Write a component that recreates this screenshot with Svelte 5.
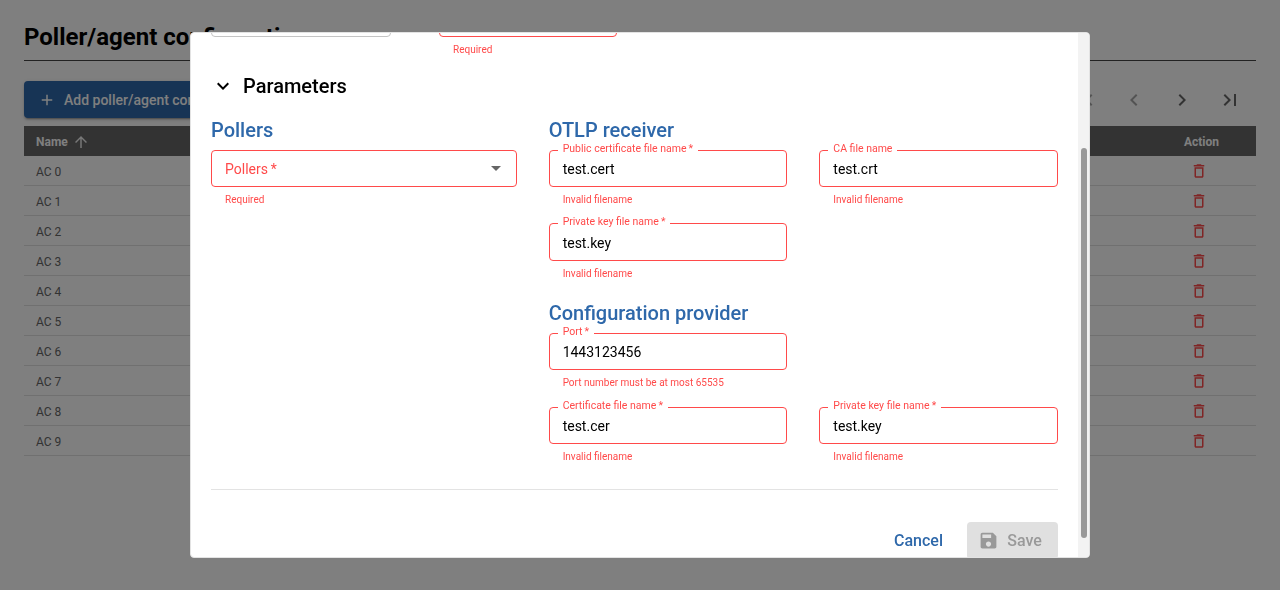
<script>
  const rows = Array.from({ length: 10 }, (_, i) => `AC ${i}`);
</script>

{#snippet icon(d, size)}
  <svg width={size} height={size} viewBox="0 0 24 24" fill="currentColor" aria-hidden="true"><path {d} /></svg>
{/snippet}

{#snippet field(label, value, error)}
  <div class="field">
    <div class="box">
      <span class="value">{value}</span>
      <span class="label">{label}</span>
      <fieldset><legend><span>{label}</span></legend></fieldset>
    </div>
    <p class="helper">{error}</p>
  </div>
{/snippet}

<main>
  <h1>Poller/agent configuration</h1>
  <div class="toolbar">
    <button class="add">{@render icon('M19 13h-6v6h-2v-6H5v-2h6V5h2v6h6v2z', 18)}<span>Add poller/agent configuration</span></button>
    <div class="pages">
      <button class="off">{@render icon('M18.41 16.59L13.82 12l4.59-4.59L17 6l-6 6 6 6zM6 6h2v12H6z', 24)}</button>
      <button class="off">{@render icon('M15.41 7.41L14 6l-6 6 6 6 1.41-1.41L10.83 12z', 24)}</button>
      <button>{@render icon('M10 6L8.59 7.41 13.17 12l-4.58 4.59L10 18l6-6z', 24)}</button>
      <button>{@render icon('M5.59 7.41L10.18 12l-4.59 4.59L7 18l6-6-6-6zM16 6h2v12h-2z', 24)}</button>
    </div>
  </div>
  <div class="row head">
    <span class="name">Name {@render icon('M4 12l1.41 1.41L11 7.83V20h2V7.83l5.58 5.59L20 12l-8-8-8 8z', 18)}</span>
    <span class="action">Action</span>
  </div>
  {#each rows as row}
    <div class="row">
      <span class="name">{row}</span>
      <span class="action trash">{@render icon('M16 9v10H8V9h8m-1.5-6h-5l-1 1H5v2h14V4h-3.5l-1-1zM18 7H6v12c0 1.1.9 2 2 2h8c1.1 0 2-.9 2-2V7z', 18)}</span>
    </div>
  {/each}
</main>

<div class="backdrop">
  <div class="modal">
    <div class="content">
      <div class="top">
        <div><div class="stub"></div></div>
        <div><div class="stub bad"></div><p class="helper">Required</p></div>
      </div>
      <div class="params">{@render icon('M16.59 8.59L12 13.17 7.41 8.59 6 10l6 6 6-6z', 24)}<h2>Parameters</h2></div>
      <div class="columns">
        <section>
          <h3>Pollers</h3>
          <div class="box select">
            <span class="value">{'Pollers\u2009*'}</span>
            <span class="arrow">{@render icon('M7 10l5 5 5-5z', 24)}</span>
            <fieldset></fieldset>
          </div>
          <p class="helper">Required</p>
        </section>
        <div class="right">
          <section>
            <h3>OTLP receiver</h3>
            <div class="grid">
              {@render field('Public certificate file name\u2009*', 'test.cert', 'Invalid filename')}
              {@render field('CA file name', 'test.crt', 'Invalid filename')}
              {@render field('Private key file name\u2009*', 'test.key', 'Invalid filename')}
            </div>
          </section>
          <section class="provider">
            <h3>Configuration provider</h3>
            <div class="grid">
              {@render field('Port\u2009*', '1443123456', 'Port number must be at most 65535')}
              <div></div>
              {@render field('Certificate file name\u2009*', 'test.cer', 'Invalid filename')}
              {@render field('Private key file name\u2009*', 'test.key', 'Invalid filename')}
            </div>
          </section>
        </div>
      </div>
      <hr />
      <div class="buttons">
        <button class="cancel">Cancel</button>
        <button class="save" disabled>{@render icon('M17 3H5c-1.11 0-2 .9-2 2v14c0 1.1.89 2 2 2h14c1.1 0 2-.9 2-2V7l-4-4zm-5 16c-1.66 0-3-1.34-3-3s1.34-3 3-3 3 1.34 3 3-1.34 3-3 3zm3-10H5V5h10v4z', 21)}<span>Save</span></button>
      </div>
    </div>
    <div class="scrollbar"><div class="thumb"></div></div>
  </div>
</div>

<style>
  :global(body) {
    font-family: Roboto, sans-serif;
    background: #fff;
    overflow: hidden;
  }
  :global(*) { box-sizing: border-box; }
  h1, h2, h3, p { margin: 0; }
  button {
    font-family: inherit;
    border: 0;
    background: none;
    padding: 0;
    display: flex;
    align-items: center;
    justify-content: center;
  }
  svg { display: block; flex: none; }
  main { height: 590px; padding: 0 24px; }
  h1 {
    height: 61px;
    padding-top: 13px;
    border-bottom: 1px solid #444;
    font-size: 24px;
    line-height: 48px;
    font-weight: 700;
    color: #000;
  }
  .toolbar {
    display: flex;
    justify-content: space-between;
    height: 65px;
    padding-top: 20px;
  }
  .add {
    height: 37px;
    padding: 0 16px 0 14px;
    gap: 8px;
    background: #2e68aa;
    color: #fff;
    border-radius: 4px;
    font-size: 14px;
    font-weight: 500;
    box-shadow: 0 3px 1px -2px rgba(0, 0, 0, 0.2), 0 2px 2px rgba(0, 0, 0, 0.14), 0 1px 5px rgba(0, 0, 0, 0.12);
  }
  .pages { display: flex; height: 38px; padding-right: 2px; }
  .pages button { width: 48px; color: #666; }
  .pages .off { color: #a6a6a6; }
  .row {
    height: 30px;
    display: flex;
    align-items: center;
    justify-content: space-between;
    padding: 0 0 0 12px;
    border-bottom: 1px solid #e0e0e0;
    font-size: 12px;
    color: #666;
  }
  .head {
    background: #666;
    border: 0;
    color: #fff;
    font-weight: 700;
  }
  .name { display: flex; align-items: center; gap: 4px; padding-top: 2px; }
  .head .name { padding-top: 1px; }
  .name svg { opacity: 0.9; }
  .action { width: 110px; display: flex; justify-content: center; }
  .head .action { padding: 1px 0 0 1px; }
  .trash { color: #ff4a4a; padding-right: 4px; }
  .backdrop {
    position: fixed;
    inset: 0;
    background: rgba(0, 0, 0, 0.5);
    display: flex;
    align-items: center;
    justify-content: center;
  }
  .modal {
    width: 900px;
    height: 526px;
    background: #fff;
    border: 1px solid #e3e3e3;
    border-radius: 4px;
    overflow: hidden;
    display: flex;
  }
  .content { width: 887px; padding: 0 20px; flex: none; }
  .scrollbar {
    width: 11px;
    flex: none;
    background: #f3f3f3;
    padding: 115px 2px 0 3px;
  }
  .thumb { width: 6px; height: 390px; border-radius: 3px; background: #999; }
  .top { display: flex; gap: 48px; height: 41px; }
  .top > div { width: 180px; }
  .top > div + div { width: 178px; }
  .stub {
    height: 37px;
    margin-top: -33px;
    border: 1px solid #c4c4c4;
    border-radius: 4px;
  }
  .stub.bad { border-color: #ff4a4a; }
  .params { height: 24px; display: flex; align-items: center; }
  h2 { margin-left: 8px; font-size: 20px; line-height: 24px; font-weight: 500; }
  .columns { display: grid; grid-template-columns: 3fr 5fr; gap: 32px; padding-top: 19.7px; }
  h3 { font-size: 20px; line-height: 24px; height: 32px; font-weight: 500; color: #2e68aa; }
  .grid { display: grid; grid-template-columns: 1fr 1fr; gap: 16px 32px; }
  .provider { margin-top: 19.7px; }
  .box { position: relative; height: 37.125px; padding: 0 14px; display: flex; align-items: center; }
  .value { font-size: 14px; line-height: 20px; letter-spacing: 0; color: #000; padding-top: 1.4px; }
  .label {
    position: absolute;
    left: 14px;
    top: -8px;
    font-size: 10.5px;
    line-height: 13px;
    color: #ff4a4a;
    white-space: nowrap;
  }
  fieldset {
    position: absolute;
    inset: -5px 0 0;
    margin: 0;
    padding: 0 8px;
    min-width: 0;
    border: 1px solid #ff4a4a;
    border-radius: 4px;
    pointer-events: none;
  }
  legend { height: 11px; padding: 0; font-size: 10.5px; visibility: hidden; white-space: nowrap; }
  legend span { padding: 0 5px; display: inline-block; }
  .select { justify-content: space-between; padding-right: 9px; }
  .select fieldset { top: 0; }
  .select .value { color: #ff4a4a; }
  .arrow { color: #666; }
  .helper {
    margin: 5px 14px 0;
    font-size: 10px;
    line-height: 15.6px;
    color: #ff4a4a;
    white-space: nowrap;
  }
  hr { margin: 25px 0 0; border: 0; height: 1px; background: #e3e3e3; }
  .buttons { display: flex; justify-content: flex-end; gap: 16px; padding-top: 32px; }
  .buttons button { height: 37px; font-size: 16px; font-weight: 500; }
  .cancel { padding: 0 8px; color: #2e68aa; }
  .buttons .save { width: 91px; padding: 0 5px 1px 0; gap: 8px; background: #e0e0e0; color: #999; border-radius: 4px; }
</style>
